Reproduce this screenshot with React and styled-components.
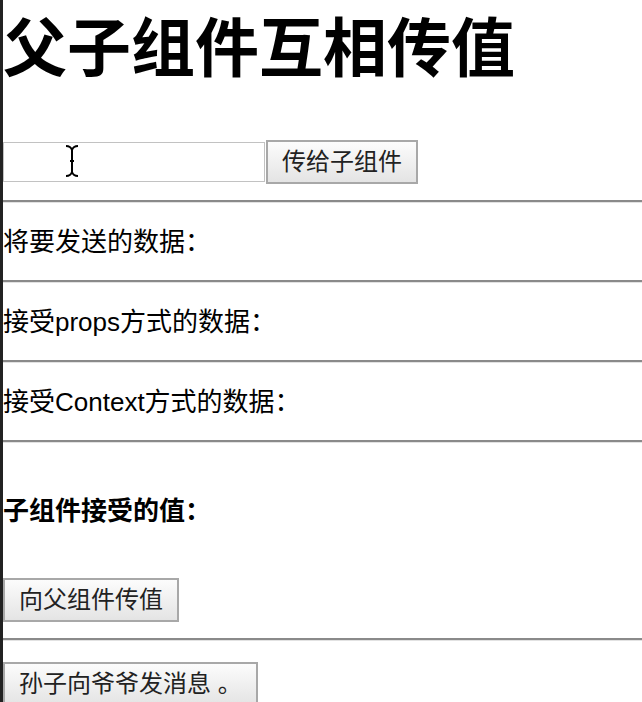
import React from "react";
import styled, { createGlobalStyle } from "styled-components";

const GlobalStyle = createGlobalStyle`
  html, body {
    margin: 0;
    padding: 0;
    background: #ffffff;
  }
  body {
    font-family: "Liberation Sans", "Noto Sans CJK SC", sans-serif;
    color: #000000;
  }
`;

const Page = styled.div`
  min-height: 100vh;
  border-left: 3px solid #222222;
  display: flex;
  flex-direction: column;
`;

const Title = styled.h1`
  margin: 0;
  font-size: 64px;
  font-weight: 700;
  line-height: 98px;
  white-space: nowrap;
`;

const SendRow = styled.div`
  display: flex;
  align-items: center;
  margin-top: 42px;
`;

const InputWrap = styled.div`
  position: relative;
  display: flex;
`;

const TextInput = styled.input`
  box-sizing: border-box;
  width: 262px;
  height: 40px;
  border: 1px solid #c2c2c2;
  margin: 0;
  padding: 0 6px;
  font-size: 22px;
  outline: none;
`;

const Cursor = styled.svg`
  position: absolute;
  left: 61px;
  top: 2px;
  pointer-events: none;
`;

const Button = styled.button`
  box-sizing: border-box;
  height: 44px;
  margin: 0 0 0 ${(p) => p.$gap || 0}px;
  padding: 0 14px;
  border: 2px solid #a8a8a8;
  border-radius: 0;
  background: linear-gradient(#fcfcfc, #e4e4e4);
  color: #222222;
  font-family: "Liberation Sans", "Noto Sans CJK SC", sans-serif;
  font-size: 24px;
  line-height: 28px;
  white-space: nowrap;
  align-self: flex-start;
`;

const Divider = styled.hr`
  margin: ${(p) => p.$top || 0}px 0 0;
  height: 0;
  border: none;
  border-top: 2px solid #8a8a8a;
  border-bottom: 1px solid #e2e2e2;
`;

const Line = styled.p`
  margin: 0;
  padding: 24px 0 23px;
  font-size: 26px;
  line-height: 30px;
  white-space: nowrap;
`;

const ChildTitle = styled.h3`
  margin: 53px 0 52px;
  font-size: 26px;
  font-weight: 700;
  line-height: 30px;
`;

const ChildBlock = styled.div`
  display: flex;
  flex-direction: column;
`;

const GrandBlock = styled.div`
  display: flex;
  flex-direction: column;
  padding-top: 21px;
`;

function IBeam() {
  return (
    <Cursor width="16" height="34" viewBox="0 0 16 34">
      <path
        d="M2 2 C5 2 7 3 8 6 C9 3 11 2 14 2 M8 6 L8 28 M2 32 C5 32 7 31 8 28 C9 31 11 32 14 32 M6 17 L10 17"
        fill="none"
        stroke="#000"
        strokeWidth="2"
      />
    </Cursor>
  );
}

export default function App() {
  const rows = ["将要发送的数据：", "接受props方式的数据：", "接受Context方式的数据："];

  return (
    <Page>
      <GlobalStyle />
      <Title>父子组件互相传值</Title>
      <SendRow>
        <InputWrap>
          <TextInput type="text" />
          <IBeam />
        </InputWrap>
        <Button $gap={1}>传给子组件</Button>
      </SendRow>
      <Divider $top={16} />
      {rows.map((text) => (
        <React.Fragment key={text}>
          <Line>{text}</Line>
          <Divider />
        </React.Fragment>
      ))}
      <ChildBlock>
        <ChildTitle>子组件接受的值：</ChildTitle>
        <Button>向父组件传值</Button>
      </ChildBlock>
      <Divider $top={16} />
      <GrandBlock>
        <Button>孙子向爷爷发消息 。</Button>
      </GrandBlock>
    </Page>
  );
}
